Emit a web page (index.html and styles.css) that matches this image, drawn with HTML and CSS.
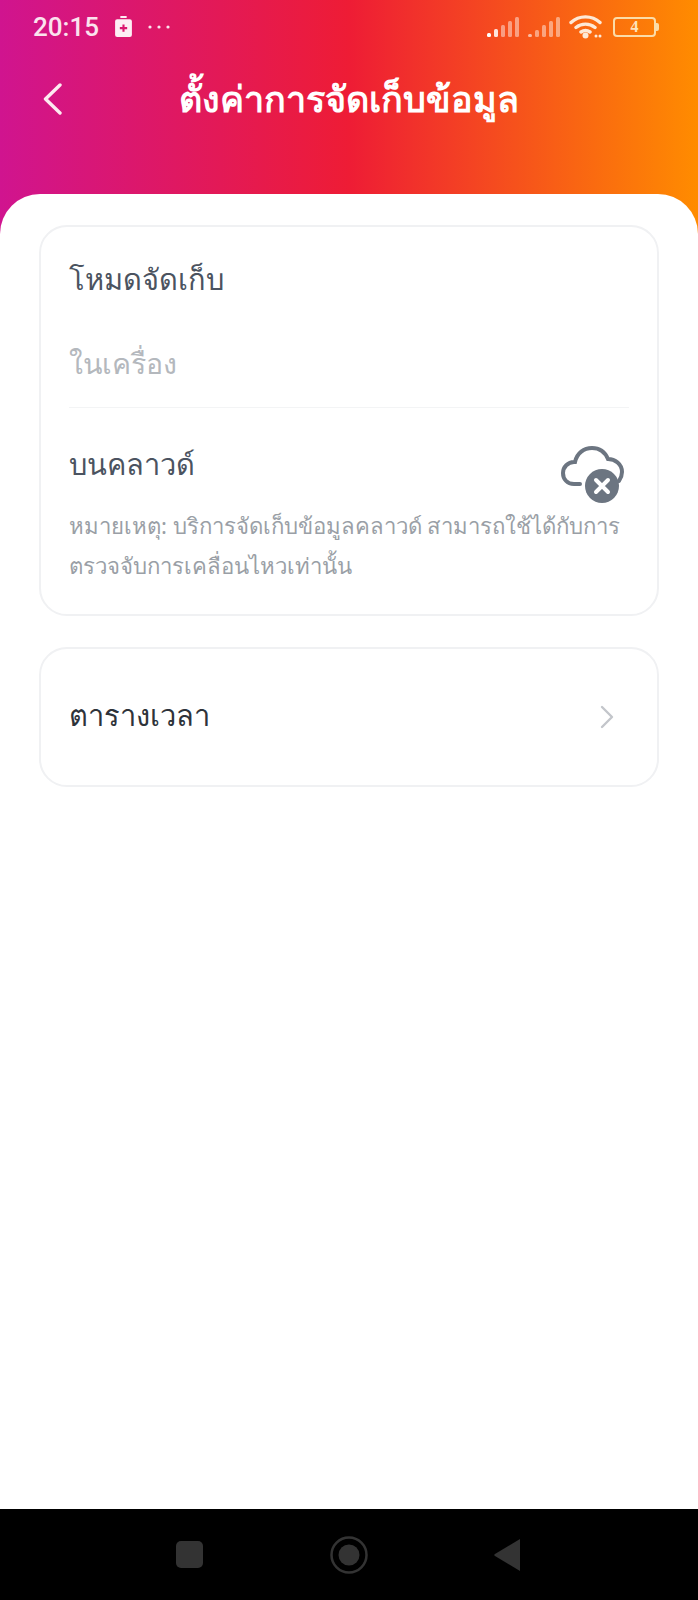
FILE: index.html
```html
<!DOCTYPE html>
<html>
<head>
  <title>ตั้งค่าการจัดเก็บข้อมูล</title>
  <link rel="stylesheet" href="styles.css">
</head>
<body>
  <div id="app">
    <div id="header">
      <div id="status">
        <span class="time">20:15</span>
        <svg class="medkit" width="17" height="21" viewBox="0 0 16 20">
          <path fill="#fdeef4" fill-rule="evenodd" d="M5 0h6v2H5zM2 3h12a2 2 0 0 1 2 2v13a2 2 0 0 1-2 2H2a2 2 0 0 1-2-2V5a2 2 0 0 1 2-2zM7 8v2.500H4.500v2H7V15h2v-2.500h2.500v-2H9V8z"/>
        </svg>
        <svg class="dots" width="22" height="4" viewBox="0 0 22 4">
          <circle cx="2" cy="2" r="1.600" fill="#fbe3ee"/>
          <circle cx="11" cy="2" r="1.600" fill="#fbe3ee"/>
          <circle cx="20" cy="2" r="1.600" fill="#fbe3ee"/>
        </svg>
        <div class="status-right">
          <svg width="33" height="22" viewBox="0 0 33 22">
            <rect x="0" y="17" width="4" height="4" rx="1.500" fill="#fff"/>
            <rect x="7" y="13" width="4" height="8" rx="1.500" fill="#fff" opacity=".85"/>
            <rect x="14" y="9" width="4" height="12" rx="1.500" fill="#fff" opacity=".45"/>
            <rect x="21" y="5" width="4" height="16" rx="1.500" fill="#fff" opacity=".45"/>
            <rect x="28" y="1" width="4" height="20" rx="1.500" fill="#fff" opacity=".45"/>
          </svg>
          <svg width="33" height="22" viewBox="0 0 33 22">
            <rect x="0" y="18" width="4" height="3" rx="1.500" fill="#fff" opacity=".6"/>
            <rect x="7" y="14" width="4" height="7" rx="1.500" fill="#fff" opacity=".45"/>
            <rect x="14" y="9" width="4" height="12" rx="1.500" fill="#fff" opacity=".45"/>
            <rect x="21" y="5" width="4" height="16" rx="1.500" fill="#fff" opacity=".45"/>
            <rect x="28" y="1" width="4" height="20" rx="1.500" fill="#fff" opacity=".45"/>
          </svg>
          <svg width="33" height="25" viewBox="0 0 33 25">
            <path fill="none" stroke="#fde9d6" stroke-width="3.400" stroke-linecap="round" d="M2 8.500C10 1 23 1 31 8.500M7 13.500c5.500-4.500 13.500-4.500 19 0M12 18c2.800-2 6.200-2 9 0"/>
            <circle cx="16.500" cy="21.500" r="3" fill="#fde9d6"/>
            <circle cx="27" cy="22" r="1.500" fill="#fde9d6"/>
            <circle cx="31" cy="22" r="1.500" fill="#fde9d6"/>
          </svg>
          <div class="battery"><span>4</span></div>
        </div>
      </div>
      <div id="nav">
        <svg class="back" width="20" height="32" viewBox="0 0 20 32">
          <path fill="none" stroke="#fdeaf0" stroke-width="3.400" stroke-linecap="round" stroke-linejoin="round" d="M17 2L2.500 16 17 30"/>
        </svg>
        <h1>ตั้งค่าการจัดเก็บข้อมูล</h1>
      </div>
    </div>

    <div id="sheet">
      <div class="card">
        <div class="card-title">โหมดจัดเก็บ</div>
        <div class="option-off">ในเครื่อง</div>
        <div class="cloud">
          <div class="cloud-top">
            <div class="cloud-label">บนคลาวด์</div>
            <svg class="cloud-icon" width="64" height="58" viewBox="0 0 64 58">
              <path fill="none" stroke="#6c7581" stroke-width="4" stroke-linecap="round" d="M19 38H13C6 38 2 33 2 27c0-6 5-11 11-11h1C16 7 23 2 31 2c7 0 13 4 16 11 7 0 14 5 14 13 0 4-1 6-3 9"/>
              <circle cx="41" cy="40" r="17" fill="#6c7581"/>
              <path fill="none" stroke="#fff" stroke-width="4" stroke-linecap="round" d="M35 34l12 12M47 34L35 46"/>
            </svg>
          </div>
          <div class="note">หมายเหตุ: บริการจัดเก็บข้อมูลคลาวด์ สามารถใช้ได้กับการตรวจจับการเคลื่อนไหวเท่านั้น</div>
        </div>
      </div>

      <div class="card schedule">
        <div class="schedule-label">ตารางเวลา</div>
        <svg width="14" height="24" viewBox="0 0 14 24">
          <path fill="none" stroke="#c3c6cb" stroke-width="2.400" stroke-linecap="round" stroke-linejoin="round" d="M2 2l10 10L2 22"/>
        </svg>
      </div>
    </div>

    <div id="softkeys">
      <svg width="27" height="27" viewBox="0 0 27 27"><rect width="27" height="27" rx="5" fill="#333"/></svg>
      <svg width="38" height="38" viewBox="0 0 38 38">
        <circle cx="19" cy="19" r="17.500" fill="none" stroke="#333" stroke-width="2.500"/>
        <circle cx="19" cy="19" r="10.500" fill="#333"/>
      </svg>
      <svg width="27" height="32" viewBox="0 0 27 32"><path fill="#333" d="M26 0v32L1 17a1.200 1.200 0 0 1 0-2z"/></svg>
    </div>
  </div>
</body>
</html>
```

FILE: styles.css
```css
* {
  border: 0;
  padding: 0;
  margin: 0;
  box-sizing: border-box;
}
body {
  font-family: "Noto Sans", "Inter", "DejaVu Sans", sans-serif;
  background: #fff;
}
#app {
  width: 698px;
  height: 1600px;
  display: flex;
  flex-direction: column;
  background: #fff;
}
#header {
  height: 234px;
  margin-bottom: -40px;
  background: linear-gradient(90deg, #d0148f 0%, #ee1c35 50%, #ff8c00 100%);
}
#status {
  height: 52px;
  display: flex;
  align-items: center;
  padding: 1px 42px 0 33px;
}
.time {
  font-family: "Roboto", sans-serif;
  font-size: 26px;
  font-weight: 500;
  color: #fbe3ee;
}
.medkit {
  margin-left: 16px;
}
.dots {
  margin-left: 16px;
}
.status-right {
  margin-left: auto;
  display: flex;
  align-items: center;
  gap: 8px;
}
.battery {
  width: 43px;
  height: 20px;
  margin-left: 3px;
  border: 2px solid #fbdca8;
  border-radius: 4px;
  display: flex;
  align-items: center;
  justify-content: center;
  color: #fde3bd;
  font-family: "Liberation Serif", serif;
  font-size: 16px;
  font-weight: bold;
  position: relative;
}
.battery::after {
  content: "";
  position: absolute;
  right: -5px;
  top: 4px;
  width: 3px;
  height: 8px;
  border-radius: 0 2px 2px 0;
  background: #fbdca8;
}
#nav {
  height: 94px;
  padding-left: 43px;
  display: flex;
  align-items: center;
  position: relative;
}
#nav h1 {
  position: absolute;
  left: 0;
  right: 0;
  text-align: center;
  font-size: 36px;
  font-weight: 700;
  color: #fff;
}
#sheet {
  flex: 1;
  padding: 31px 39px 0;
  background: #fff;
  border-radius: 40px 40px 0 0;
  display: flex;
  flex-direction: column;
  gap: 31px;
  position: relative;
}
.card {
  border: 2px solid #f0f1f3;
  border-radius: 28px;
  padding: 0 28px;
}
.card-title {
  font-size: 29px;
  font-weight: 500;
  color: #4b5360;
  padding-top: 30px;
  line-height: 44px;
}
.option-off {
  font-size: 28.500px;
  color: #b4b8bd;
  line-height: 44px;
  padding-top: 40px;
  border-bottom: 1px solid #f3f4f5;
  height: 107px;
}
.cloud {
  padding: 34px 0 28px;
}
.cloud-top {
  display: flex;
  justify-content: space-between;
  height: 64px;
}
.cloud-label {
  font-size: 29px;
  color: #4b5360;
  line-height: 44px;
}
.cloud-icon {
  margin-top: 4px;
  margin-right: 4px;
}
.note {
  font-size: 22.200px;
  line-height: 40px;
  color: #9a9fa6;
}
.schedule {
  height: 140px;
  display: flex;
  align-items: center;
  justify-content: space-between;
}
.schedule-label {
  font-size: 29px;
  color: #2e333a;
  padding-bottom: 3px;
}
.schedule svg {
  margin-right: 15px;
}
#softkeys {
  height: 91px;
  background: #000;
  display: flex;
  align-items: center;
  padding: 0 177px 0 176px;
  justify-content: space-between;
}
```
